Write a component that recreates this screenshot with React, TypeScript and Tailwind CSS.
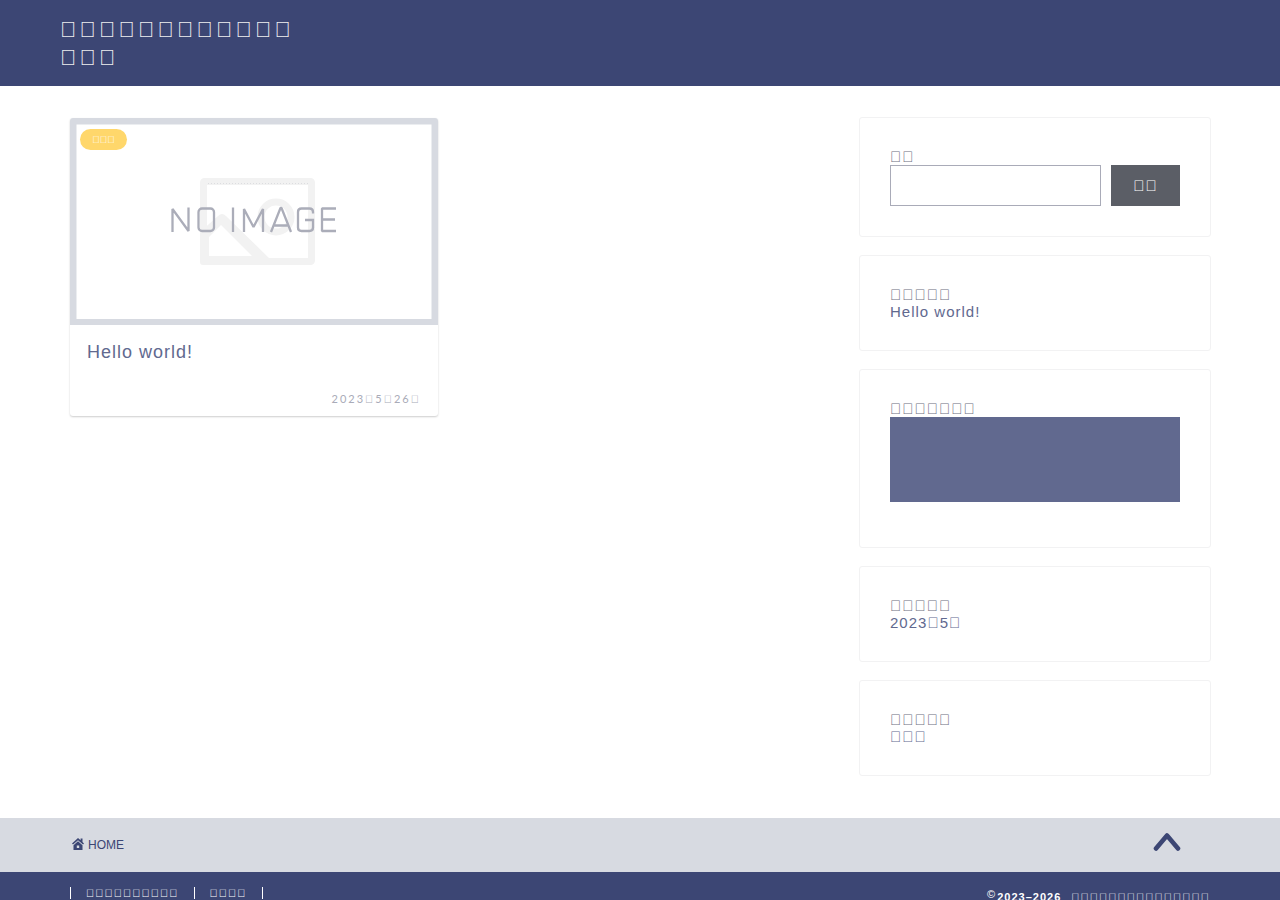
import type { ReactNode } from "react";

const box = (count: number) => "\uE7F0".repeat(count);

function DateMark() {
  return <span className="font-['Liberation_Sans',Arial,sans-serif]">{box(1)}</span>;
}

function Widget({ title, children }: { title: ReactNode; children?: ReactNode }) {
  return (
    <section className="rounded-[3px] border border-[#f2f2f3] p-[30px] text-[15px] leading-[17px] tracking-[1px] text-[#61698f]">
      <h2 className="text-[#6c6e80]">{title}</h2>
      {children}
    </section>
  );
}

function NoImage() {
  return (
    <svg viewBox="0 0 368 207" className="block w-full" role="img" aria-label="NO IMAGE">
      <rect width="368" height="207" fill="#d7dae1" />
      <rect x="6.500" y="6.500" width="355" height="194.500" fill="#fff" />
      <rect x="133.500" y="63.500" width="108" height="80" rx="1" fill="none" stroke="#f2f2f2" strokeWidth="7" />
      <path d="M138 65.500H238" stroke="#dcdde0" strokeDasharray="1 2" />
      <circle cx="206" cy="99" r="15" fill="none" stroke="#f2f2f2" strokeWidth="7" />
      <path d="M130 114L148 98q4-4 8 0L200 141v6H133q-3 0-3-3zM139 119V138H182L151 107z" fill="#f2f2f2" fillRule="evenodd" />
      <g fill="none" stroke="#abadb9" strokeWidth="2.300">
        <path d="M102.500 114V91l16 22V89.500M163 89.500V114M174 114V91l9.500 18 9.500-18v23M201 114l9.500-24h1l9.500 24M204.500 107.500h13M266 90.500h-14v22.500h14M252 101.500h13" strokeLinejoin="bevel" />
        <rect x="128.500" y="90.500" width="15.500" height="22.500" rx="3.500" />
        <path d="M243 95.500v-1.500q0-3.500-3.500-3.500h-8q-3.500 0-3.500 3.500v15.500q0 3.500 3.500 3.500h8q3.500 0 3.500-3.500v-7.500h-8" />
      </g>
    </svg>
  );
}

function HomeIcon() {
  return (
    <svg viewBox="0 0 14 14" className="h-[14px] w-[14px] fill-[#3c4674]" aria-hidden="true">
      <path d="M7 0L1 5.500l1 1.100L7 2.200l5 4.400 1-1.100-1.500-1.400V0.500H9.600v1.800z" />
      <path d="M7 3.300L2.500 7.300V12h9V7.300zM5.800 7.500h2.400V10H5.800z" fillRule="evenodd" />
    </svg>
  );
}

export default function App() {
  return (
    <div className="font-['Liberation_Sans',Arial,sans-serif] text-[#61698f]">
      <header className="bg-[#3c4674] px-[60px] pt-[16px] pb-[14px]">
        <h1 className="w-[240px] text-[22px] leading-[28px] tracking-[3px] text-[#f0f0f0]">
          <a href="#">{box(12)}<wbr />{box(3)}</a>
        </h1>
      </header>

      <div className="mx-auto flex max-w-[1142px] items-start justify-between pt-[31px] pb-[42px]">
        <main className="ml-px pt-px">
          <article className="relative w-[368px] overflow-hidden rounded-[3px] shadow-[0_1px_2px_rgba(0,0,0,0.2)]">
            <a href="#"><NoImage /></a>
            <a href="#" className="absolute top-[11px] left-[10px] flex h-[21px] w-[47px] items-center justify-center rounded-full bg-[#ffd76b] text-[10px] font-bold text-white">
              {box(3)}
            </a>
            <div className="px-[17px] pt-[15px] pb-[9px]">
              <h2 className="text-[18px] leading-[25px] tracking-[1px]"><a href="#">Hello world!</a></h2>
              <p className="mt-[26px] text-right font-['Lato',sans-serif] text-[11px] leading-[16px] tracking-[2px] text-[#a9abb8]">
                <time dateTime="2023-05-26">2023<DateMark />5<DateMark />26<DateMark /></time>
              </p>
            </div>
          </article>
        </main>

        <aside className="flex w-[352px] flex-col gap-[18px]">
          <Widget title={<label htmlFor="search">{box(2)}</label>}>
            <form className="flex gap-[10px]" onSubmit={(event) => event.preventDefault()}>
              <input id="search" type="search" className="h-[41px] min-w-0 flex-1 border border-[#a9abb8] bg-white px-2 outline-none" />
              <button className="h-[41px] w-[69px] bg-[#5b5e66] tracking-[1px] text-white">{box(2)}</button>
            </form>
          </Widget>
          <Widget title={box(5)}>
            <a href="#" className="block">Hello world!</a>
          </Widget>
          <Widget title={box(7)}>
            <div className="mb-[15px] h-[85px] bg-[#61698f]" />
          </Widget>
          <Widget title={box(5)}>
            <a href="#" className="block">2023{box(1)}5{box(1)}</a>
          </Widget>
          <Widget title={box(5)}>
            <a href="#" className="block">{box(3)}</a>
          </Widget>
        </aside>
      </div>

      <nav className="h-[54px] bg-[#d7dae1] text-[#3c4674]">
        <div className="mx-auto flex h-full max-w-[1140px] items-center justify-between pr-[29px]">
          <a href="#" className="flex items-center gap-[3px] pl-px text-[12px]"><HomeIcon />HOME</a>
          <a href="#" aria-label="Top" className="pb-[6px]">
            <svg viewBox="0 0 28 18" className="h-[18px] w-[28px]" aria-hidden="true">
              <path d="M3 15.500L14 2.500l11 13" fill="none" stroke="#3c4674" strokeWidth="4.600" strokeLinecap="round" strokeLinejoin="round" />
            </svg>
          </a>
        </div>
      </nav>

      <footer className="bg-[#3c4674] pb-[15px] text-[11px] text-white">
        <div className="mx-auto flex max-w-[1140px] items-start justify-between pt-[15px]">
          <ul className="flex border-l border-white leading-[12px] tracking-[1px]">
            <li className="border-r border-white px-[15px]"><a href="#">{box(10)}</a></li>
            <li className="border-r border-white px-[15px]"><a href="#">{box(4)}</a></li>
          </ul>
          <p className="flex pt-[3px] leading-[14px] tracking-[1px]">
            <small className="-mt-[3px] mr-px text-[11px]">©</small>
            <span className="font-bold">2023–2026</span>
            <span className="ml-[10px]">{box(15)}</span>
          </p>
        </div>
      </footer>
    </div>
  );
}
